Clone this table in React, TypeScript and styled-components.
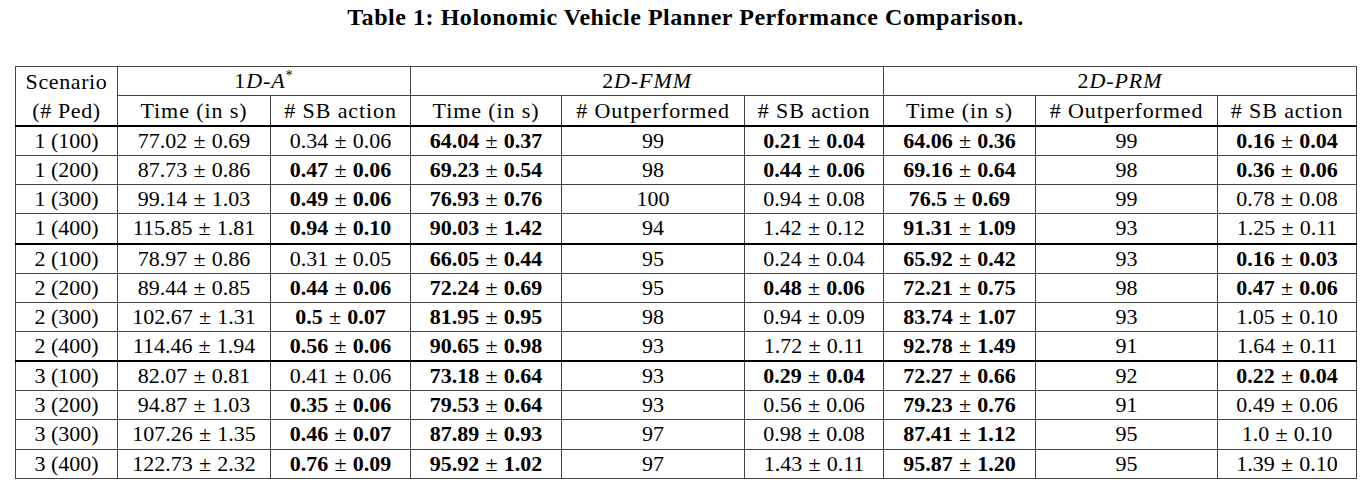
import React from 'react';
import styled, { createGlobalStyle } from 'styled-components';

const GlobalStyle = createGlobalStyle`
  html, body {
    margin: 0;
    padding: 0;
    background: #ffffff;
  }
  body {
    font-family: "Liberation Serif", "Times New Roman", serif;
    color: #000;
  }
`;

const Page = styled.div`
  width: 1366px;
  height: 484px;
  padding: 5px 10px 0 15px;
  box-sizing: border-box;
  overflow: hidden;
`;

const Caption = styled.h1`
  margin: 0 0 37px;
  text-align: center;
  font-size: 24px;
  line-height: 24px;
  font-weight: 700;
  letter-spacing: 0.55px;
`;

const Table = styled.table`
  width: 1341px;
  border-collapse: collapse;
  table-layout: fixed;
  font-size: 22px;
  border: 1.5px solid #555;
`;

const HeadCell = styled.th`
  font-weight: 400;
  height: 27.8px;
  padding: 0;
  text-align: center;
  border: 1px solid #444;
  line-height: 28px;
  letter-spacing: 0.9px;
  white-space: nowrap;
`;

const ScenarioHead = styled(HeadCell)`
  line-height: 29px;
  letter-spacing: 0.6px;
  border-bottom: 2px solid #000;
`;

const SubHead = styled(HeadCell)`
  border-bottom: 2px solid #000;
`;

const Row = styled.tr<{ $groupEnd?: boolean }>`
  & > td {
    border-bottom: ${p => (p.$groupEnd ? '2px solid #000' : '1px solid #444')};
  }
`;

const Cell = styled.td<{ $bold?: boolean }>`
  height: 28.15px;
  padding: 0;
  text-align: center;
  border-left: 1px solid #444;
  border-right: 1px solid #444;
  font-weight: ${p => (p.$bold ? 700 : 400)};
  white-space: nowrap;
  line-height: 28px;
`;

const Pm = styled.span`
  font-weight: 400;
  margin: 0 0.28em;
`;

const Ital = styled.i`
  font-style: italic;
`;

const Star = styled.sup`
  font-size: 0.65em;
  line-height: 0;
  vertical-align: 0.55em;
`;

type Val = { v: string; b?: boolean };

const rows: { s: string; cells: (Val | number)[] }[] = [
  { s: '1 (100)', cells: [{ v: '77.02 0.69' }, { v: '0.34 0.06' }, { v: '64.04 0.37', b: true }, 99, { v: '0.21 0.04', b: true }, { v: '64.06 0.36', b: true }, 99, { v: '0.16 0.04', b: true }] },
  { s: '1 (200)', cells: [{ v: '87.73 0.86' }, { v: '0.47 0.06', b: true }, { v: '69.23 0.54', b: true }, 98, { v: '0.44 0.06', b: true }, { v: '69.16 0.64', b: true }, 98, { v: '0.36 0.06', b: true }] },
  { s: '1 (300)', cells: [{ v: '99.14 1.03' }, { v: '0.49 0.06', b: true }, { v: '76.93 0.76', b: true }, 100, { v: '0.94 0.08' }, { v: '76.5 0.69', b: true }, 99, { v: '0.78 0.08' }] },
  { s: '1 (400)', cells: [{ v: '115.85 1.81' }, { v: '0.94 0.10', b: true }, { v: '90.03 1.42', b: true }, 94, { v: '1.42 0.12' }, { v: '91.31 1.09', b: true }, 93, { v: '1.25 0.11' }] },
  { s: '2 (100)', cells: [{ v: '78.97 0.86' }, { v: '0.31 0.05' }, { v: '66.05 0.44', b: true }, 95, { v: '0.24 0.04' }, { v: '65.92 0.42', b: true }, 93, { v: '0.16 0.03', b: true }] },
  { s: '2 (200)', cells: [{ v: '89.44 0.85' }, { v: '0.44 0.06', b: true }, { v: '72.24 0.69', b: true }, 95, { v: '0.48 0.06', b: true }, { v: '72.21 0.75', b: true }, 98, { v: '0.47 0.06', b: true }] },
  { s: '2 (300)', cells: [{ v: '102.67 1.31' }, { v: '0.5 0.07', b: true }, { v: '81.95 0.95', b: true }, 98, { v: '0.94 0.09' }, { v: '83.74 1.07', b: true }, 93, { v: '1.05 0.10' }] },
  { s: '2 (400)', cells: [{ v: '114.46 1.94' }, { v: '0.56 0.06', b: true }, { v: '90.65 0.98', b: true }, 93, { v: '1.72 0.11' }, { v: '92.78 1.49', b: true }, 91, { v: '1.64 0.11' }] },
  { s: '3 (100)', cells: [{ v: '82.07 0.81' }, { v: '0.41 0.06' }, { v: '73.18 0.64', b: true }, 93, { v: '0.29 0.04', b: true }, { v: '72.27 0.66', b: true }, 92, { v: '0.22 0.04', b: true }] },
  { s: '3 (200)', cells: [{ v: '94.87 1.03' }, { v: '0.35 0.06', b: true }, { v: '79.53 0.64', b: true }, 93, { v: '0.56 0.06' }, { v: '79.23 0.76', b: true }, 91, { v: '0.49 0.06' }] },
  { s: '3 (300)', cells: [{ v: '107.26 1.35' }, { v: '0.46 0.07', b: true }, { v: '87.89 0.93', b: true }, 97, { v: '0.98 0.08' }, { v: '87.41 1.12', b: true }, 95, { v: '1.0 0.10' }] },
  { s: '3 (400)', cells: [{ v: '122.73 2.32' }, { v: '0.76 0.09', b: true }, { v: '95.92 1.02', b: true }, 97, { v: '1.43 0.11' }, { v: '95.87 1.20', b: true }, 95, { v: '1.39 0.10' }] },
];

const widths = [102, 153, 140, 151, 183, 139, 152, 182, 139];

const Measure = ({ v, b }: Val) => {
  const [mean, sd] = v.split(' ');
  return (
    <Cell $bold={b}>
      {mean}
      <Pm>±</Pm>
      {sd}
    </Cell>
  );
};

export default function App() {
  return (
    <>
      <GlobalStyle />
      <Page>
        <Caption>Table 1: Holonomic Vehicle Planner Performance Comparison.</Caption>
        <Table>
          <colgroup>
            {widths.map((w, i) => (
              <col key={i} style={{ width: w }} />
            ))}
          </colgroup>
          <thead>
            <tr>
              <ScenarioHead rowSpan={2}>
                Scenario
                <br />
                (# Ped)
              </ScenarioHead>
              <HeadCell colSpan={2}>
                1<Ital>D-A</Ital>
                <Star>*</Star>
              </HeadCell>
              <HeadCell colSpan={3}>
                2<Ital>D-FMM</Ital>
              </HeadCell>
              <HeadCell colSpan={3}>
                2<Ital>D-PRM</Ital>
              </HeadCell>
            </tr>
            <tr>
              <SubHead>Time (in s)</SubHead>
              <SubHead># SB action</SubHead>
              <SubHead>Time (in s)</SubHead>
              <SubHead># Outperformed</SubHead>
              <SubHead># SB action</SubHead>
              <SubHead>Time (in s)</SubHead>
              <SubHead># Outperformed</SubHead>
              <SubHead># SB action</SubHead>
            </tr>
          </thead>
          <tbody>
            {rows.map((r, i) => (
              <Row key={r.s} $groupEnd={i === 3 || i === 7}>
                <Cell>{r.s}</Cell>
                {r.cells.map((c, j) =>
                  typeof c === 'number' ? <Cell key={j}>{c}</Cell> : <Measure key={j} {...c} />
                )}
              </Row>
            ))}
          </tbody>
        </Table>
      </Page>
    </>
  );
}
